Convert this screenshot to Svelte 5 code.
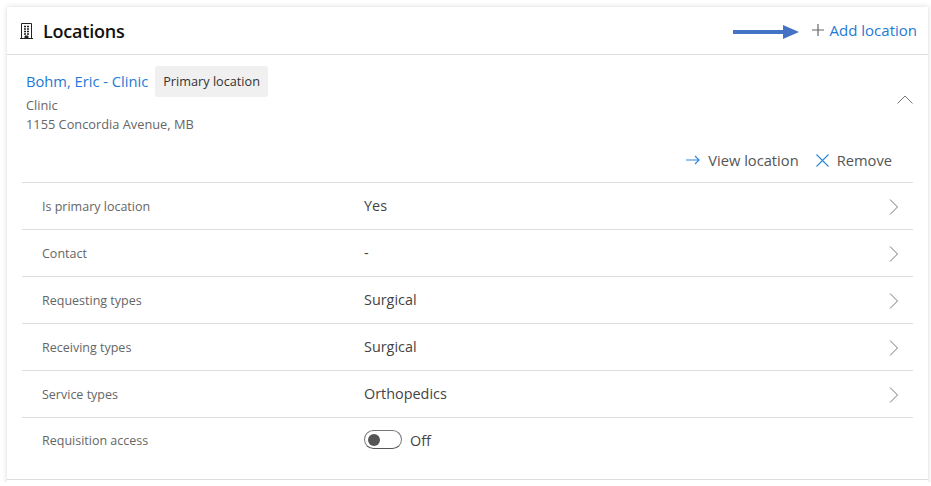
<script>
  const rows = [
    { label: 'Is primary location', value: 'Yes' },
    { label: 'Contact', value: '-' },
    { label: 'Requesting types', value: 'Surgical' },
    { label: 'Receiving types', value: 'Surgical' },
    { label: 'Service types', value: 'Orthopedics' }
  ];
</script>

<div class="page">
  <section class="card">
    <header class="head">
      <div class="title">
        <svg class="building" width="13" height="16" viewBox="0 0 13 16" fill="none" stroke="#222" stroke-width="1">
          <path d="M0 15.500h13M1.500 15.500V.5h10v15" />
          <path d="M4 3.500h2M7 3.500h2M4 6h2M7 6h2M4 8.500h2M7 8.500h2M4 11h2M7 11h2" stroke-width="1.300" />
          <path d="M5 15v-2h3v2" fill="#222" />
        </svg>
        <h2>Locations</h2>
      </div>
      <div class="add">
        <svg class="pointer" width="66" height="16" viewBox="0 0 66 16">
          <path d="M0 6h50V1l16 7-16 7v-5H0z" fill="#4472c4" />
        </svg>
        <svg class="plus" width="12" height="12" viewBox="0 0 12 12" stroke="#666" stroke-width="1.200">
          <path d="M6 0v12M0 6h12" />
        </svg>
        <span class="link">Add location</span>
      </div>
    </header>

    <div class="summary">
      <div class="info">
        <div class="name">
          <span class="link bohm">Bohm, Eric - Clinic</span>
          <span class="badge">Primary location</span>
        </div>
        <div class="sub">Clinic</div>
        <div class="sub">1155 Concordia Avenue, MB</div>
      </div>
      <svg class="chev-up" width="16" height="9" viewBox="0 0 16 9" fill="none" stroke="#777" stroke-width="1">
        <path d="M.5 8.500 8 1l7.500 7.500" />
      </svg>
    </div>

    <div class="actions">
      <span class="action">
        <svg width="14" height="10" viewBox="0 0 14 10" fill="none" stroke="#2b88d8" stroke-width="1.100">
          <path d="M0 5h13M9 1l4 4-4 4" />
        </svg>
        View location
      </span>
      <span class="action">
        <svg width="13" height="13" viewBox="0 0 13 13" fill="none" stroke="#2b88d8" stroke-width="1.100">
          <path d="M.5.500l12 12M12.500.500l-12 12" />
        </svg>
        Remove
      </span>
    </div>

    <div class="table">
      {#each rows as row}
        <div class="row">
          <span class="label">{row.label}</span>
          <span class="value up">{row.value}</span>
          <svg class="chev" width="10" height="16" viewBox="0 0 10 16" fill="none" stroke="#777" stroke-width="1">
            <path d="M1 .5 8.500 8 1 15.500" />
          </svg>
        </div>
      {/each}
      <div class="row last">
        <span class="label">Requisition access</span>
        <span class="value toggle-wrap">
          <span class="toggle"><span class="knob"></span></span>
          <span class="off">Off</span>
        </span>
      </div>
    </div>
    <div class="rule"></div>
  </section>
</div>

<style>
  :global(body) {
    margin: 0;
    background: #fff;
  }
  .page {
    width: 931px;
    height: 482px;
    padding: 7px 3px 0 7px;
    box-sizing: border-box;
    overflow: hidden;
    font-family: "Open Sans", "Noto Sans", sans-serif;
  }
  .card {
    height: 490px;
    background: #fff;
    box-shadow: 0 0 5px rgba(0, 0, 0, 0.16);
    box-sizing: border-box;
  }
  .head {
    height: 48px;
    box-sizing: border-box;
    border-bottom: 1px solid #ddd;
    display: flex;
    align-items: center;
    justify-content: space-between;
    padding: 0 11px 0 13px;
  }
  .title {
    display: flex;
    align-items: center;
    gap: 10px;
  }
  h2 {
    margin: 0;
    font-size: 18px;
    font-weight: 600;
    color: #111;
    letter-spacing: -0.2px;
  }
  .add {
    display: flex;
    align-items: center;
    font-size: 15px;
    margin-top: -1px;
  }
  .pointer {
    margin-right: 13px;
    margin-top: 3px;
  }
  .plus {
    margin-right: 6px;
  }
  .link {
    color: #1e7ad6;
  }
  .bohm {
    margin-top: -2px;
  }
  .summary {
    height: 81px;
    padding: 11px 15px 0 19px;
    box-sizing: border-box;
    display: flex;
    justify-content: space-between;
    align-items: flex-start;
  }
  .name {
    display: flex;
    align-items: center;
    gap: 7px;
    font-size: 14.700px;
    margin-bottom: -1px;
  }
  .badge {
    background: #f0f0f0;
    border-radius: 3px;
    color: #333;
    font-size: 12.700px;
    padding: 0 8px;
    height: 31px;
    line-height: 31px;
  }
  .sub {
    font-size: 12.800px;
    color: #666;
    line-height: 19px;
  }
  .chev-up {
    margin-top: 29px;
  }
  .actions {
    height: 46px;
    padding: 2px 36px 0 0;
    box-sizing: border-box;
    display: flex;
    justify-content: flex-end;
    align-items: center;
    gap: 17px;
    font-size: 14.700px;
    color: #555;
  }
  .action {
    display: flex;
    align-items: center;
    gap: 8px;
  }
  .table {
    margin: 0 15px;
  }
  .row {
    height: 47px;
    box-sizing: border-box;
    border-top: 1px solid #ddd;
    display: flex;
    align-items: center;
    padding: 1px 14px 0 20px;
  }
  .row.last {
    height: 45px;
  }
  .rule {
    height: 1px;
    margin-top: 17px;
    background: #ddd;
  }
  .label {
    width: 322px;
    font-size: 12.500px;
    color: #666;
  }
  .value {
    flex: 1;
    font-size: 14.400px;
    color: #444;
  }
  .value.up {
    margin-top: -2px;
  }
  .toggle-wrap {
    display: flex;
    align-items: center;
    gap: 8px;
  }
  .toggle {
    width: 38px;
    height: 19px;
    margin-top: -2px;
    border: 1px solid #777;
    border-bottom-color: #555;
    border-radius: 10px;
    box-sizing: border-box;
    display: flex;
    align-items: center;
    padding-left: 3px;
  }
  .knob {
    width: 12px;
    height: 12px;
    border-radius: 50%;
    background: #555;
  }
</style>
